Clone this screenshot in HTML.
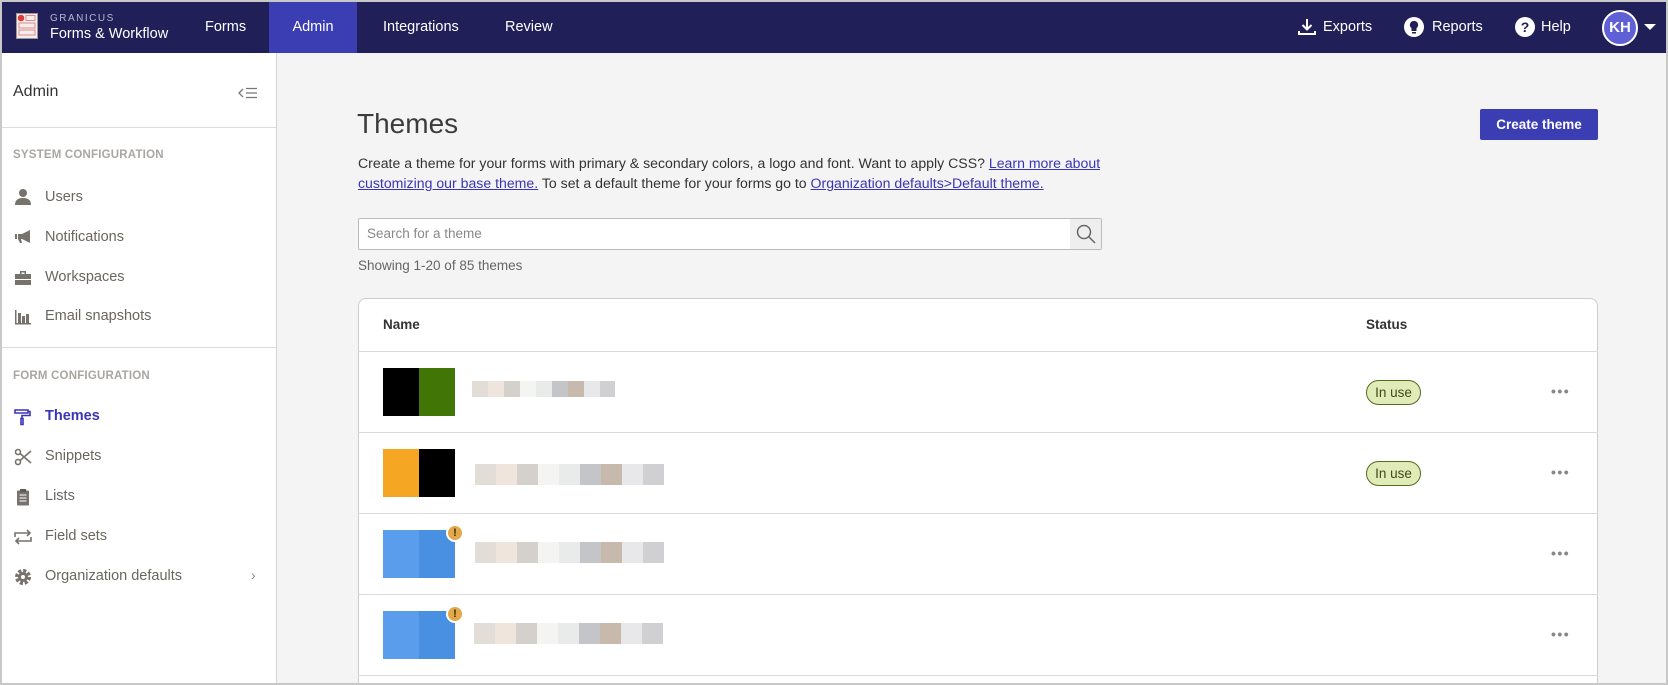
<!DOCTYPE html>
<html><head><meta charset="utf-8"><style>
*{margin:0;padding:0;box-sizing:border-box}
html{overflow:hidden;width:1668px;height:685px}
body{width:1668px;height:685px;overflow:hidden;background:#f4f4f4;font-family:"Liberation Sans",Arial,sans-serif;position:relative}
.a{position:absolute}
#hdr{position:absolute;left:2px;top:2px;width:1664px;height:51px;background:#201f58;color:#fff}
.nav{position:absolute;top:0;height:51px;line-height:50px;font-size:14.5px;color:#fff}
#side{position:absolute;left:2px;top:53px;width:275px;height:632px;background:#fff;border-right:1px solid #d4d4d4}
.si{position:absolute;left:43px;font-size:14.5px;color:#6a6660}
.ic{position:absolute;left:12px;width:18px;height:18px}
.sec{position:absolute;left:11px;font-size:11.5px;color:#a9a6a2;font-weight:bold;letter-spacing:.2px}
.hr{position:absolute;left:0;width:274px;height:1px;background:#dcdcdc}
a{color:#3a35b4;text-decoration:underline}
.row{position:absolute;left:358px;width:1240px;height:1px;background:#dadada}
.sw{position:absolute;width:72px;height:48px}
.bl{position:absolute;height:21px;display:flex}
.bl i{display:block;width:21px;height:21px}
.badge{position:absolute;left:1366px;width:55px;height:25px;border:1px solid #556b1f;border-radius:13px;background:#e0ebb8;font-size:13.5px;color:#3e4a1c;text-align:center;line-height:23px}
.dots{position:absolute;left:1551px;font-size:14px;color:#888;letter-spacing:1.5px;font-weight:bold}
.warn{position:absolute;width:18px;height:18px;border-radius:50%;background:#e3a84a;border:2px solid #fff;color:#3a2a00;font-size:11px;font-weight:bold;text-align:center;line-height:14px}
</style></head><body>
<div id="hdr">
 <svg class="a" style="left:14px;top:11px" width="22" height="26" viewBox="0 0 22 26"><rect x="0.5" y="0.5" width="21" height="25" fill="#f3eeee" stroke="#999"/><circle cx="5" cy="5" r="3.3" fill="#e03b3b"/><rect x="10" y="2.5" width="9" height="5" fill="none" stroke="#e08a8a"/><rect x="3" y="10" width="16" height="5" fill="none" stroke="#e08a8a"/><rect x="3" y="17" width="16" height="5" fill="none" stroke="#e08a8a"/></svg>
 <div class="a" style="left:48px;top:11px;font-size:10px;letter-spacing:1.5px;color:#b8b8cc">GRANICUS</div>
 <div class="a" style="left:48px;top:24px;font-size:14.5px;color:#fff">Forms &amp; Workflow</div>
 <div class="nav" style="left:203px">Forms</div>
 <div class="nav" style="left:267px;width:88px;background:#3b3db3;text-align:center">Admin</div>
 <div class="nav" style="left:381px">Integrations</div>
 <div class="nav" style="left:503px">Review</div>
 <svg class="a" style="left:1296px;top:16px" width="18" height="18" viewBox="0 0 18 18" fill="none" stroke="#fff" stroke-width="2"><path d="M9 1v10M4.5 7l4.5 4.5L13.5 7M1 13v3h16v-3"/></svg>
 <div class="nav" style="left:1321px">Exports</div>
 <svg class="a" style="left:1402px;top:15px" width="20" height="20" viewBox="0 0 20 20"><circle cx="10" cy="10" r="10" fill="#fff"/><path d="M10 4a4 4 0 0 0-2.5 7.2V14h5v-2.8A4 4 0 0 0 10 4z" fill="#201f58"/><rect x="8" y="15" width="4" height="1.5" fill="#201f58"/></svg>
 <div class="nav" style="left:1430px">Reports</div>
 <svg class="a" style="left:1513px;top:15px" width="20" height="20" viewBox="0 0 20 20"><circle cx="10" cy="10" r="10" fill="#fff"/><text x="10" y="15" text-anchor="middle" font-size="14" font-weight="bold" fill="#201f58" font-family="Liberation Sans">?</text></svg>
 <div class="nav" style="left:1539px">Help</div>
 <div class="a" style="left:1600px;top:8px;width:36px;height:36px;border-radius:50%;background:#5f5fd6;border:2px solid #fff;color:#fff;font-weight:bold;font-size:15px;text-align:center;line-height:32px">KH</div>
 <div class="a" style="left:1642px;top:22px;width:0;height:0;border-left:6px solid transparent;border-right:6px solid transparent;border-top:6px solid #fff"></div>
</div>
<div id="side">
 <div class="a" style="left:11px;top:30px;font-size:16px;color:#333">Admin</div>
 <svg class="a" style="left:236px;top:34px" width="20" height="12" viewBox="0 0 20 12" fill="none" stroke="#777" stroke-width="1.3"><path d="M5 2L1 6l4 4M8 1.5h11M8 6h11M8 10.5h11"/></svg>
 <div class="hr" style="top:74px"></div>
 <div class="sec" style="top:96px">SYSTEM CONFIGURATION</div>
 <svg class="ic" style="top:135px" viewBox="0 0 18 18" fill="#77726c"><circle cx="9" cy="5" r="4"/><path d="M1 17c0-5 3-7 8-7s8 2 8 7z"/></svg>
 <div class="si" style="top:136px">Users</div>
 <svg class="ic" style="top:175px" viewBox="0 0 18 18" fill="#77726c"><path d="M1 6h2v5H1zM4 6h4l8-4v13l-8-4H7l1 4H6l-2-4z"/></svg>
 <div class="si" style="top:176px">Notifications</div>
 <svg class="ic" style="top:216px" viewBox="0 0 18 18" fill="#77726c"><path d="M6 2h6v3h-1.5V3.5h-3V5H6z"/><rect x="1" y="5" width="16" height="5"/><rect x="1" y="11" width="16" height="5"/></svg>
 <div class="si" style="top:216px">Workspaces</div>
 <svg class="ic" style="top:255px" viewBox="0 0 18 18" fill="#77726c"><path d="M1 2h1.5v13H17v1.5H1z"/><rect x="4" y="5" width="3" height="10"/><rect x="8" y="8" width="3" height="7"/><rect x="12" y="6" width="3" height="9"/></svg>
 <div class="si" style="top:255px">Email snapshots</div>
 <div class="hr" style="top:294px"></div>
 <div class="sec" style="top:317px">FORM CONFIGURATION</div>
 <svg class="ic" style="top:355px" viewBox="0 0 18 18" fill="none" stroke="#3a35b4" stroke-width="1.6"><path d="M1 2h13v3H1zM14 3.5h2v4H8v3M7 10.5h2v6H7z"/></svg>
 <div class="si" style="top:355px;color:#3a35b4;font-weight:bold">Themes</div>
 <svg class="ic" style="top:395px" viewBox="0 0 18 18" fill="none" stroke="#77726c" stroke-width="1.6"><circle cx="4" cy="4" r="2.5"/><circle cx="4" cy="14" r="2.5"/><path d="M6 5.5L17 15M6 12.5L17 3"/></svg>
 <div class="si" style="top:395px">Snippets</div>
 <svg class="ic" style="top:435px" viewBox="0 0 18 18" fill="#77726c"><rect x="3" y="2.5" width="12" height="15" rx="1"/><rect x="6" y="1" width="6" height="3" fill="#5e5a55"/><path d="M5.5 7h7M5.5 10h7M5.5 13h7" stroke="#fff" stroke-width="1"/></svg>
 <div class="si" style="top:435px">Lists</div>
 <svg class="ic" style="top:475px" viewBox="0 0 18 18" fill="none" stroke="#77726c" stroke-width="1.6"><path d="M1 9V5h15M13 2l3 3-3 3M17 9v4H2M5 16l-3-3 3-3"/></svg>
 <div class="si" style="top:475px">Field sets</div>
 <svg class="ic" style="top:515px" viewBox="0 0 18 18"><circle cx="9" cy="9" r="6" fill="none" stroke="#77726c" stroke-width="4" stroke-dasharray="3 1.7"/><circle cx="9" cy="9" r="5" fill="#77726c"/><circle cx="9" cy="9" r="2" fill="#fff"/></svg>
 <div class="si" style="top:515px">Organization defaults</div>
 <div class="a" style="left:249px;top:514px;color:#888;font-size:14px">›</div>
</div>
<div class="a" style="left:357px;top:108px;font-size:28px;color:#3c3c3c">Themes</div>
<div class="a" style="left:358px;top:153px;width:760px;font-size:14.1px;line-height:20px;color:#333">Create a theme for your forms with primary &amp; secondary colors, a logo and font. Want to apply CSS? <a>Learn more about customizing our base theme.</a> To set a default theme for your forms go to <a>Organization defaults&gt;Default theme.</a></div>
<div class="a" style="left:1480px;top:109px;width:118px;height:31px;background:#3b3db3;border-radius:2px;color:#fff;font-size:13.5px;font-weight:bold;text-align:center;line-height:31px">Create theme</div>
<div class="a" style="left:358px;top:218px;width:744px;height:32px;background:#fff;border:1px solid #bbb;border-radius:2px"></div>
<div class="a" style="left:1070px;top:219px;width:31px;height:30px;background:#eee"></div>
<svg class="a" style="left:1076px;top:224px" width="20" height="20" viewBox="0 0 20 20" fill="none" stroke="#666" stroke-width="1.5"><circle cx="8" cy="8" r="6.5"/><path d="M13 13l6 6"/></svg>
<div class="a" style="left:367px;top:226px;font-size:13.5px;color:#888">Search for a theme</div>
<div class="a" style="left:358px;top:258px;font-size:13.5px;color:#666">Showing 1-20 of 85 themes</div>
<div class="a" style="left:358px;top:298px;width:1240px;height:387px;background:#fff;border:1px solid #ccc;border-bottom:none;border-radius:8px 8px 0 0"></div>
<div class="a" style="left:383px;top:317px;font-size:13.5px;font-weight:bold;color:#333">Name</div>
<div class="a" style="left:1366px;top:317px;font-size:13.5px;font-weight:bold;color:#333">Status</div>
<div class="row" style="top:351px"></div>
<div class="row" style="top:432px"></div>
<div class="row" style="top:513px"></div>
<div class="row" style="top:594px"></div>
<div class="row" style="top:675px"></div>
<div class="sw" style="left:383px;top:368px;background:linear-gradient(90deg,#000 50%,#417505 50%)"></div>
<div class="bl" style="left:472px;top:381px;height:16px"><i style="background:#e3ddd8;width:16px;height:16px"></i><i style="background:#efe5dd;width:16px;height:16px"></i><i style="background:#d4d0cc;width:16px;height:16px"></i><i style="background:#f4f4f2;width:16px;height:16px"></i><i style="background:#e9eaea;width:16px;height:16px"></i><i style="background:#c4c5c9;width:16px;height:16px"></i><i style="background:#c8b9ad;width:16px;height:16px"></i><i style="background:#e8e8ea;width:16px;height:16px"></i><i style="background:#d0d0d2;width:15px;height:16px"></i></div>
<div class="badge" style="top:380px">In use</div><div class="dots" style="top:383px">•••</div>
<div class="sw" style="left:383px;top:449px;background:linear-gradient(90deg,#f5a623 50%,#000 50%)"></div>
<div class="badge" style="top:461px">In use</div><div class="dots" style="top:464px">•••</div>
<div class="sw" style="left:383px;top:530px;background:linear-gradient(90deg,#5b9ded 50%,#4a90e2 50%)"></div>
<div class="warn" style="left:446px;top:524px">!</div><div class="dots" style="top:545px">•••</div>
<div class="sw" style="left:383px;top:611px;background:linear-gradient(90deg,#5b9ded 50%,#4a90e2 50%)"></div>
<div class="warn" style="left:446px;top:605px">!</div><div class="dots" style="top:626px">•••</div>
<div class="bl" style="left:475px;top:464px"><i style="background:#e3ddd8"></i><i style="background:#efe5dd"></i><i style="background:#d4d0cc"></i><i style="background:#f4f4f2"></i><i style="background:#e9eaea"></i><i style="background:#c4c5c9"></i><i style="background:#c8b9ad"></i><i style="background:#e8e8ea"></i><i style="background:#d0d0d2"></i></div>
<div class="bl" style="left:475px;top:542px"><i style="background:#e3ddd8"></i><i style="background:#efe5dd"></i><i style="background:#d4d0cc"></i><i style="background:#f4f4f2"></i><i style="background:#e9eaea"></i><i style="background:#c4c5c9"></i><i style="background:#c8b9ad"></i><i style="background:#e8e8ea"></i><i style="background:#d0d0d2"></i></div>
<div class="bl" style="left:474px;top:623px"><i style="background:#e3ddd8"></i><i style="background:#efe5dd"></i><i style="background:#d4d0cc"></i><i style="background:#f4f4f2"></i><i style="background:#e9eaea"></i><i style="background:#c4c5c9"></i><i style="background:#c8b9ad"></i><i style="background:#e8e8ea"></i><i style="background:#d0d0d2"></i></div>
<div class="a" style="left:0;top:0;width:1668px;height:2px;background:#c8c8c8"></div>
<div class="a" style="left:0;top:0;width:2px;height:685px;background:#c8c8c8"></div>
<div class="a" style="left:0;top:683px;width:1668px;height:2px;background:#c8c8c8"></div>
<div class="a" style="left:1666px;top:0;width:2px;height:685px;background:#c8c8c8"></div>
</body></html>
